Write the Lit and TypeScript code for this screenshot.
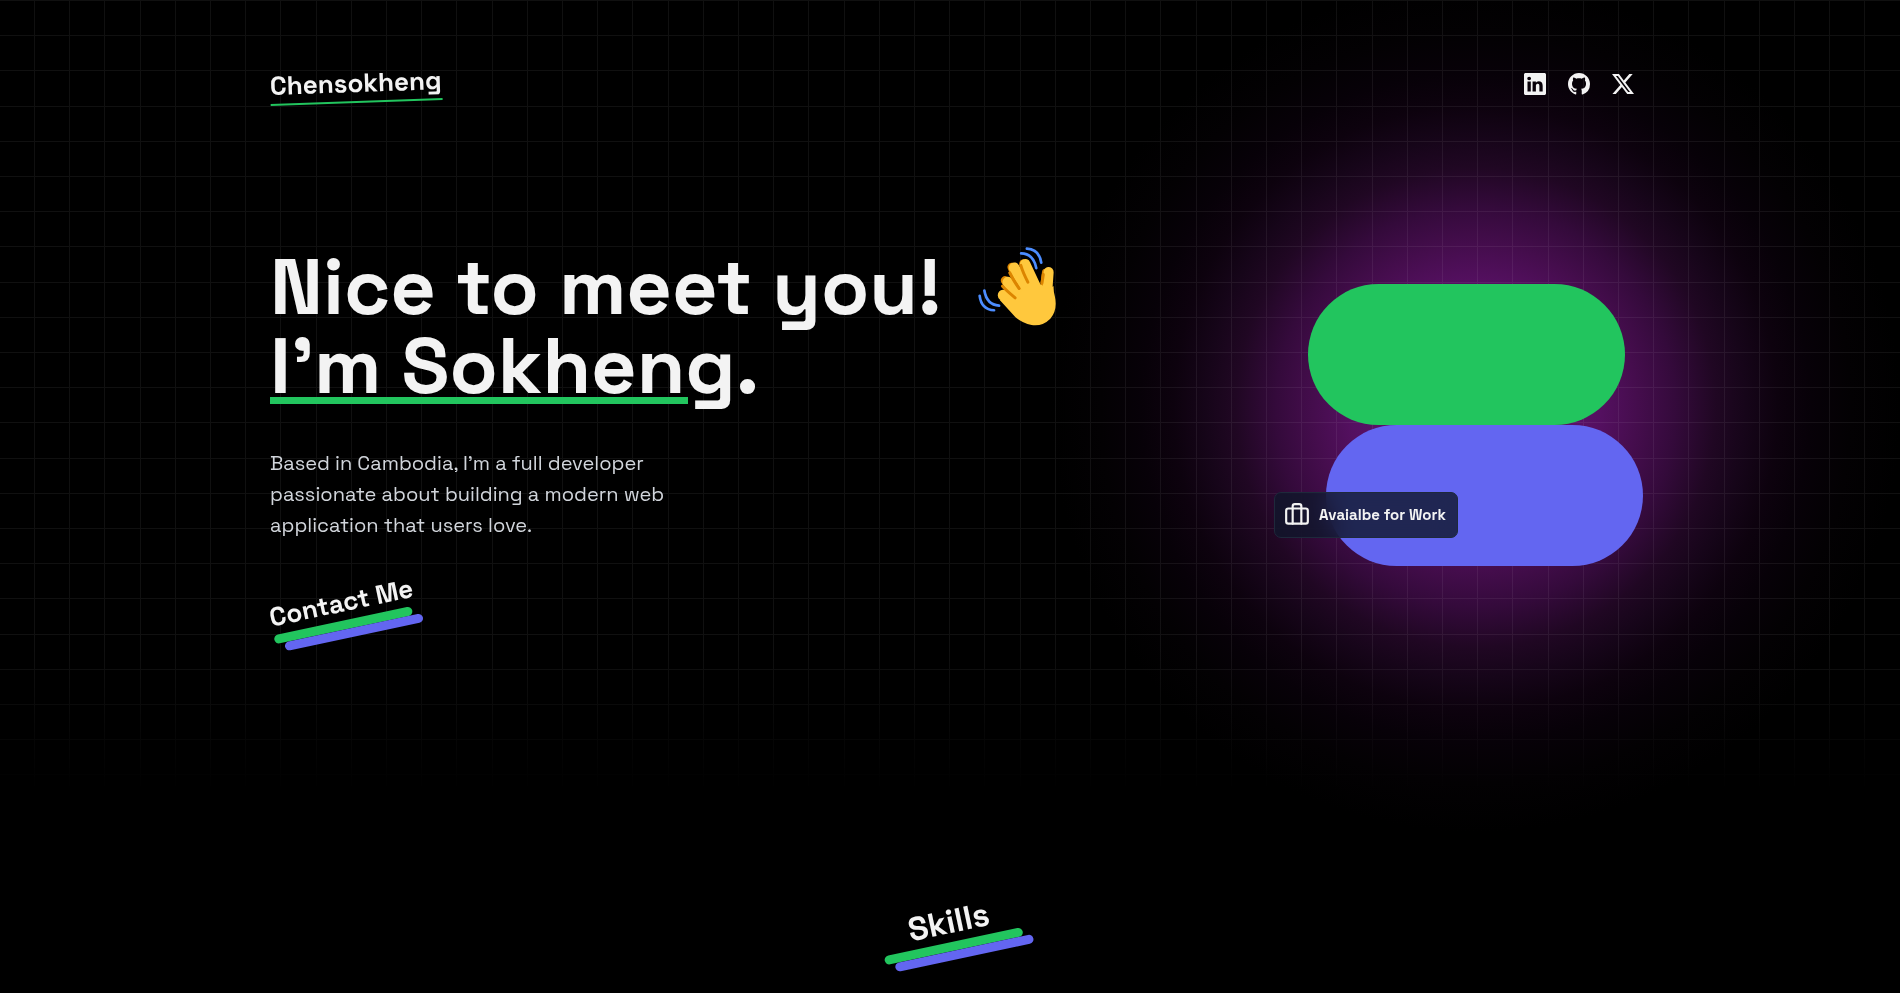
import { LitElement, html, css, svg } from "lit";
import { customElement, property } from "lit/decorators.js";

const SOCIALS = [
  {
    label: "LinkedIn",
    href: "#linkedin",
    path: "M0 1.146C0 .513.526 0 1.175 0h13.65C15.474 0 16 .513 16 1.146v13.708c0 .633-.526 1.146-1.175 1.146H1.175C.526 16 0 15.487 0 14.854V1.146zm4.943 12.248V6.169H2.542v7.225h2.401zm-1.2-8.212c.837 0 1.358-.554 1.358-1.248-.015-.709-.52-1.248-1.342-1.248-.822 0-1.359.54-1.359 1.248 0 .694.521 1.248 1.327 1.248h.016zm4.908 8.212V9.359c0-.216.016-.432.08-.586.173-.431.568-.878 1.232-.878.869 0 1.216.662 1.216 1.634v3.865h2.401V9.25c0-2.22-1.184-3.252-2.764-3.252-1.274 0-1.845.7-2.165 1.193v.025h-.016a5.54 5.54 0 0 1 .016-.025V6.169h-2.4c.03.678 0 7.225 0 7.225h2.4z",
  },
  {
    label: "GitHub",
    href: "#github",
    path: "M8 0C3.58 0 0 3.58 0 8c0 3.54 2.29 6.53 5.47 7.59.4.07.55-.17.55-.38 0-.19-.01-.82-.01-1.49-2.01.37-2.53-.49-2.69-.94-.09-.23-.48-.94-.82-1.13-.28-.15-.68-.52-.01-.53.63-.01 1.08.58 1.23.82.72 1.21 1.87.87 2.33.66.07-.52.28-.87.51-1.07-1.78-.2-3.64-.89-3.64-3.95 0-.87.31-1.59.82-2.15-.08-.2-.36-1.02.08-2.12 0 0 .67-.21 2.2.82.64-.18 1.32-.27 2-.27.68 0 1.36.09 2 .27 1.53-1.04 2.2-.82 2.2-.82.44 1.1.16 1.92.08 2.12.51.56.82 1.27.82 2.15 0 3.07-1.87 3.75-3.65 3.95.29.25.54.73.54 1.48 0 1.07-.01 1.93-.01 2.2 0 .21.15.46.55.38A8.012 8.012 0 0 0 16 8c0-4.42-3.58-8-8-8z",
  },
  {
    label: "X",
    href: "#x",
    path: "M12.6.75h2.454l-5.36 6.142L16 15.25h-4.937l-3.867-5.07-4.425 5.07H.316l5.733-6.57L0 .75h5.063l3.495 4.633L12.601.75Zm-.86 13.028h1.36L4.323 2.145H2.865l8.875 11.633Z",
  },
];

/** Tilted label resting on a green and an indigo bar. */
@customElement("tilted-label")
class TiltedLabel extends LitElement {
  @property({ reflect: true }) size = "md";

  static styles = css`
    :host {
      display: inline-flex;
      flex-direction: column;
      width: 141px;
      transform: rotate(-12deg);
    }
    .text {
      white-space: nowrap;
      font-size: 26px;
      line-height: 36px;
    }
    :host([size="lg"]) .text {
      font-size: 33px;
      line-height: 40px;
      text-align: center;
    }
    .bar {
      height: 9px;
      border-radius: 9px;
      background: #22c55e;
    }
    .bar.second {
      background: #6366f1;
      transform: translateX(9px);
    }
  `;

  render() {
    return html`
      <span class="text"><slot></slot></span>
      <span class="bar"></span>
      <span class="bar second"></span>
    `;
  }
}

@customElement("waving-hand")
class WavingHand extends LitElement {
  static styles = css`
    :host,
    svg {
      display: block;
    }
  `;

  render() {
    return html`
      <svg width="79" height="79" viewBox="716 51 236 236" fill="none" stroke-linecap="round" aria-hidden="true">
        <g stroke="#dc8500" stroke-width="26">
          <path d="M797 151 L830 197" />
          <path d="M817 111 L842 170" />
          <path d="M852 101 L868 150" />
        </g>
        <path d="M918 127 L914 158" stroke="#dc8500" stroke-width="22" />
        <g stroke="#ffc83d" stroke-width="32">
          <path d="M791 195 L850 248" />
          <path d="M805 156 L862 220" />
          <path d="M824 113 L872 192" />
          <path d="M857 103 L892 178" />
          <path d="M927 126 L923 182" stroke-width="30" />
        </g>
        <path
          d="M830 200 L868 160 L905 163 L920 176 L942 168 Q941 184 946 200 Q954 240 932 265 Q908 289 876 284 Q850 279 828 261 L781 209 Z"
          fill="#ffc83d"
        />
        <g stroke="#dc8500" stroke-width="9">
          <path d="M789 168 Q797 178 827 203" />
          <path d="M811 128 Q820 148 839 175" />
          <path d="M844 106 Q850 127 865 156" />
          <path d="M911 133 Q909 148 907 159" />
        </g>
        <g stroke="#4c8dff" stroke-width="8">
          <path d="M845 70 Q882 71 890 114" />
          <path d="M862 56 Q899 58 905 98" />
          <path d="M735 181 Q742 224 779 226" />
          <path d="M721 197 Q726 238 764 240" />
        </g>
      </svg>
    `;
  }
}

@customElement("app-root")
class AppRoot extends LitElement {
  static styles = css`
    :host {
      display: block;
      position: relative;
      min-height: 100vh;
      overflow: hidden;
      background: #000;
      color: #f3f3f3;
      font-family: "Space Grotesk", Inter, "Liberation Sans", sans-serif;
      font-weight: 700;
    }
    a {
      color: inherit;
      text-decoration: none;
    }
    .grid {
      position: absolute;
      inset: 0 0 auto 0;
      width: 100%;
      height: 790px;
      mask-image: linear-gradient(#000 82%, transparent 100%);
    }
    .page {
      position: relative;
      max-width: 1364px;
      margin: 0 auto;
      padding: 64px 0 24px 4px;
    }
    header {
      display: flex;
      justify-content: space-between;
      align-items: center;
      height: 40px;
    }
    .logo {
      font-size: 26px;
      line-height: 36px;
      border-bottom: 2px solid #22c55e;
      transform: rotate(-2deg);
    }
    nav {
      display: flex;
      gap: 22px;
    }
    nav a,
    nav svg {
      display: block;
    }
    .hero {
      display: flex;
      justify-content: space-between;
      align-items: flex-start;
      margin-top: 143px;
    }
    h1 {
      margin: 0;
      font-size: 79px;
      line-height: 79px;
      font-weight: 700;
    }
    .greeting {
      display: flex;
      align-items: center;
      gap: 36px;
      white-space: nowrap;
    }
    .name {
      text-decoration: underline;
      text-decoration-color: #22c55e;
      text-decoration-thickness: 7px;
      text-underline-offset: 4px;
    }
    .intro {
      max-width: 410px;
      margin: 43px 0 44px;
      font-size: 20px;
      line-height: 31px;
      font-weight: 400;
      color: #d1d5db;
    }
    .contact {
      display: block;
      padding: 0;
      border: 0;
      background: none;
      color: inherit;
      font: inherit;
      text-align: left;
      cursor: pointer;
    }
    .visual {
      position: relative;
      margin: 37px 9px 0 0;
    }
    .glow {
      position: absolute;
      inset: -300px;
      background: radial-gradient(
        circle at 51% 48%,
        #64147a 0,
        #5b1168 95px,
        #541060 125px,
        #450d4d 162px,
        #340a3b 200px,
        #200723 240px,
        #160519 270px,
        #0d020e 302px,
        #070108 335px,
        #030103 375px,
        #000 425px
      );
      mix-blend-mode: screen;
    }
    .pill {
      position: relative;
      width: 317px;
      height: 141px;
      border-radius: 71px;
      background: #22c55e;
    }
    .pill.second {
      background: #6366f1;
      transform: translateX(18px);
    }
    .badge {
      position: absolute;
      left: -34px;
      top: 208px;
      display: flex;
      align-items: center;
      gap: 9px;
      height: 44px;
      padding: 0 11px 0 9px;
      border: 1px solid #1e293b;
      border-radius: 7px;
      background: rgba(15, 23, 42, 0.8);
      backdrop-filter: blur(12px);
      font-size: 15px;
      line-height: 20px;
      white-space: nowrap;
    }
    .skills {
      display: flex;
      justify-content: center;
      margin: 263px 4px 0 0;
      font-weight: 700;
    }
  `;

  private renderGrid() {
    const offsets = [0, 35, 70, 106, 141];
    return html`
      <svg class="grid" aria-hidden="true">
        <defs>
          <pattern id="cells" width="176" height="176" patternUnits="userSpaceOnUse">
            ${offsets.map(
              (o) => svg`
                <rect x="0" y=${o} width="176" height="1" fill="#101010" />
                <rect x=${o + 34} y="0" width="1" height="176" fill="#101010" />
              `
            )}
          </pattern>
        </defs>
        <rect width="100%" height="100%" fill="url(#cells)" />
      </svg>
    `;
  }

  render() {
    return html`
      ${this.renderGrid()}
      <div class="page">
        <header>
          <a class="logo" href="#home">Chensokheng</a>
          <nav aria-label="Social links">
            ${SOCIALS.map(
              (s) => html`
                <a href=${s.href} aria-label=${s.label}>
                  <svg width="22" height="22" viewBox="0 0 16 16" fill="currentColor"><path d=${s.path} /></svg>
                </a>
              `
            )}
          </nav>
        </header>

        <main>
          <section class="hero">
            <div>
              <h1>
                <span class="greeting">Nice to meet you! <waving-hand></waving-hand></span>
                <span class="name">I’m Sokheng</span>.
              </h1>
              <p class="intro">
                Based in Cambodia, I’m a full developer passionate about building a modern web application that users
                love.
              </p>
              <button class="contact"><tilted-label>Contact Me</tilted-label></button>
            </div>
            <div class="visual">
              <div class="glow"></div>
              <div class="pill"></div>
              <div class="pill second"></div>
              <div class="badge">
                <svg
                  width="26"
                  height="26"
                  viewBox="0 0 24 24"
                  fill="none"
                  stroke="currentColor"
                  stroke-width="2"
                  stroke-linecap="round"
                  stroke-linejoin="round"
                  aria-hidden="true"
                >
                  <path d="M16 20V4a2 2 0 0 0-2-2h-4a2 2 0 0 0-2 2v16" />
                  <rect width="20" height="14" x="2" y="6" rx="2" />
                </svg>
                <span>Avaialbe for Work</span>
              </div>
            </div>
          </section>
          <h2 class="skills"><tilted-label size="lg">Skills</tilted-label></h2>
        </main>
      </div>
    `;
  }
}
